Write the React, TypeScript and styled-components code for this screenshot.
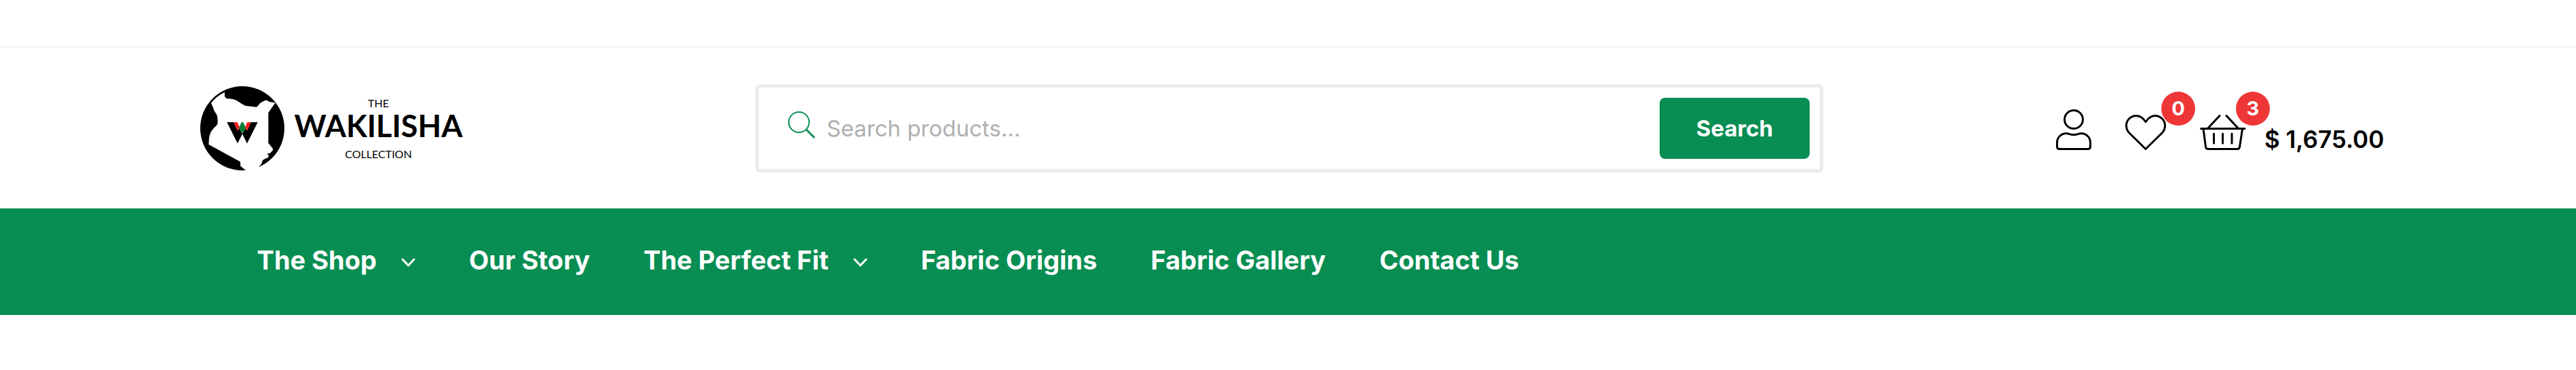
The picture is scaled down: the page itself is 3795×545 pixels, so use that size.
import React from 'react';
import styled, { createGlobalStyle } from 'styled-components';

const green = '#088e52';

const GlobalStyle = createGlobalStyle`
  *, *::before, *::after { box-sizing: border-box; }
  body {
    margin: 0;
    background: #fff;
    color: #000;
    font-family: Inter, "Liberation Sans", sans-serif;
  }
  button, input { font-family: inherit; }
`;

const TopStrip = styled.div`
  height: 70px;
  border-bottom: 2px solid #f3f3f3;
`;

const Header = styled.header`
  display: grid;
  grid-template-columns: 21fr 40fr 21fr;
  align-items: center;
  padding: 54px 7.45% 53px 7.55%;
`;

const LogoLink = styled.a`
  display: flex;
  align-items: center;
  gap: 15px;
  padding-left: 8px;
  color: #000;
  text-decoration: none;
  font-family: Lato, sans-serif;
`;

const LogoWords = styled.span`
  display: flex;
  flex-direction: column;
  align-items: center;
`;

const LogoSmall = styled.span`
  font-size: 16px;
  line-height: 20px;
`;

const LogoName = styled.span`
  margin: 3px 0 12px;
  font-size: 45px;
  font-weight: 700;
  line-height: 40px;
`;

const SearchForm = styled.form`
  display: flex;
  align-items: center;
  height: 130px;
  padding: 15px 15px 15px 43px;
  border: 5px solid #ebebeb;
  border-radius: 6px;
`;

const SearchInput = styled.input`
  flex: 1;
  min-width: 0;
  height: 90px;
  padding: 0 17px;
  border: 0;
  outline: 0;
  background: transparent;
  font-size: 33px;
  &::placeholder { color: #b0b0b0; opacity: 1; }
`;

const SearchButton = styled.button`
  height: 90px;
  padding: 0 54px;
  border: 0;
  border-radius: 8px;
  background: ${green};
  color: #fff;
  font-size: 33px;
  font-weight: 700;
`;

const Actions = styled.div`
  display: flex;
  justify-content: flex-end;
  align-items: flex-end;
  gap: 50px;
  padding-top: 4px;
`;

const ActionLink = styled.a`
  position: relative;
  display: flex;
  align-items: flex-end;
  gap: 27px;
  color: #000;
  text-decoration: none;
`;

const LineIcon = styled.svg`
  display: block;
  fill: none;
  stroke: currentColor;
  stroke-width: 3;
  stroke-linecap: round;
  stroke-linejoin: round;
`;

const Badge = styled.span`
  position: absolute;
  bottom: 36px;
  left: 53px;
  width: 50px;
  border-radius: 50%;
  background: #ef3636;
  color: #fff;
  font-size: 29px;
  font-weight: 700;
  line-height: 50px;
  text-align: center;
`;

const Price = styled.span`
  font-size: 35px;
  font-weight: 600;
  line-height: 32px;
  white-space: nowrap;
`;

const NavBar = styled.nav`
  padding: 0 7.45% 0 7.55%;
  background: ${green};
`;

const NavList = styled.ul`
  display: flex;
  align-items: center;
  gap: 79px;
  min-height: 157px;
  margin: 0;
  padding: 0 0 5px 92px;
  list-style: none;
`;

const NavLink = styled.a`
  display: flex;
  align-items: center;
  gap: 36px;
  color: #fff;
  font-size: 38px;
  font-weight: 700;
  line-height: 48px;
  text-decoration: none;
  white-space: nowrap;
`;

const navItems = [
  { label: 'The Shop', menu: true },
  { label: 'Our Story' },
  { label: 'The Perfect Fit', menu: true },
  { label: 'Fabric Origins' },
  { label: 'Fabric Gallery' },
  { label: 'Contact Us' },
];

function LogoMark() {
  return (
    <svg width="124" height="124" viewBox="44 36 372 372" aria-hidden="true">
      <circle cx="230" cy="222" r="186" />
      <path
        fill="#fff"
        d="M152 62V80Q156 90 165 91Q190 91 206 100Q225 114 243 122L292 128Q300 124 306 113Q325 98 338 98L352 106L376 109L345 153V287L363 309Q368 320 360 324L352 333L342 332L341 338L347 340L344 352Q330 356 320 363L314 380L303 392V415H250L243 406L222 389L221 370L82 294Q80 250 98 228Q108 215 116 210L121 200Q122 175 117 162Q103 145 100 128L92 110Q115 80 152 62Z"
      />
      <path d="M162 195H192L209 232L216 221L230 247L209 289ZM298 195H268L251 232L244 221L230 247L251 289Z" />
      <path fill="#ff1f1a" d="M192 195H208L218 217L209 232ZM268 195H252L242 217L251 232Z" />
      <path fill="#088038" d="M226 195H234L245 220L230 247L215 220Z" />
    </svg>
  );
}

export default function App() {
  return (
    <>
      <GlobalStyle />
      <TopStrip />
      <Header>
        <LogoLink href="#" aria-label="The Wakilisha Collection">
          <LogoMark />
          <LogoWords>
            <LogoSmall>THE</LogoSmall>
            <LogoName>WAKILISHA</LogoName>
            <LogoSmall>COLLECTION</LogoSmall>
          </LogoWords>
        </LogoLink>

        <SearchForm role="search" onSubmit={(e: React.FormEvent) => e.preventDefault()}>
          <svg width="40" height="50" viewBox="0 0 40 50" fill="none" stroke={green} strokeWidth="2" aria-hidden="true">
            <circle cx="16" cy="16" r="15" />
            <path d="M27 27L39 39" strokeWidth="3" />
          </svg>
          <SearchInput type="text" aria-label="Search products" placeholder="Search products..." />
          <SearchButton type="submit">Search</SearchButton>
        </SearchForm>

        <Actions>
          <ActionLink href="#" aria-label="Account">
            <LineIcon width="52" height="60" viewBox="0 0 52 60">
              <circle cx="26" cy="15" r="13.5" />
              <path d="M1.5 49C1.5 41 8 35.5 15 35.5C19 35.5 20 37.5 26 37.5C32 37.5 33 35.5 37 35.5C44 35.5 50.5 41 50.5 49V55Q50.5 58.5 47 58.5H5Q1.5 58.5 1.5 55Z" />
            </LineIcon>
          </ActionLink>
          <ActionLink href="#" aria-label="Wishlist">
            <LineIcon width="60" height="52" viewBox="0 0 60 52">
              <path d="M30 10.5C26 4.5 21 1.5 16 1.5C8 1.5 1.5 8 1.5 16C1.5 20 3 24 6 27L30 50.5L54 27C57 24 58.5 20 58.5 16C58.5 8 52 1.5 44 1.5C39 1.5 34 4.5 30 10.5Z" />
            </LineIcon>
            <Badge>0</Badge>
          </ActionLink>
          <ActionLink href="#" aria-label="Cart">
            <LineIcon width="68" height="52" viewBox="0 0 68 52">
              <path d="M29 1.5L12.5 19M39 1.5L55.5 19M1.5 20.5H66M5 21L8.5 47.5Q9 50.5 12 50.5H55Q58 50.5 58.5 47.5L62.5 21M20.5 28V42M33.5 28V42M47 28V42" />
            </LineIcon>
            <Badge>3</Badge>
            <Price>$ 1,675.00</Price>
          </ActionLink>
        </Actions>
      </Header>

      <NavBar aria-label="Main">
        <NavList>
          {navItems.map((item) => (
            <li key={item.label}>
              <NavLink href="#">
                {item.label}
                {item.menu && (
                  <LineIcon width="21" height="20" viewBox="0 0 21 20" aria-hidden="true">
                    <path d="M2 9L10.5 18L19 9" />
                  </LineIcon>
                )}
              </NavLink>
            </li>
          ))}
        </NavList>
      </NavBar>
    </>
  );
}
